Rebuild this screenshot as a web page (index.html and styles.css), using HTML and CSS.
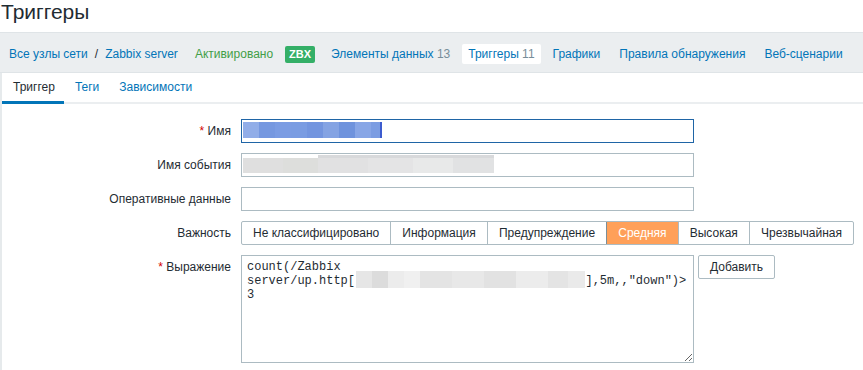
FILE: index.html
```html
<!DOCTYPE html>
<html lang="ru">
<head>
  <meta charset="UTF-8" />
  <meta name="viewport" content="width=device-width, initial-scale=1.0" />
  <title>Триггеры</title>
  <link rel="stylesheet" href="styles.css">
</head>
<body>
  <h1 class="page-title">Триггеры</h1>

  <nav class="host-nav">
    <ul class="breadcrumbs">
      <li><a href="#">Все узлы сети</a></li>
      <li class="separator">/</li>
      <li><a href="#">Zabbix server</a></li>
    </ul>
    <span class="nav-item status-on">Активировано</span>
    <span class="badge-zbx">ZBX</span>
    <a class="nav-item" href="#">Элементы данных <sup>13</sup></a>
    <a class="nav-item active" href="#">Триггеры <sup>11</sup></a>
    <a class="nav-item" href="#">Графики</a>
    <a class="nav-item" href="#">Правила обнаружения</a>
    <a class="nav-item" href="#">Веб-сценарии</a>
  </nav>

  <div class="tab-container">
    <ul class="tabs">
      <li class="tab selected">Триггер</li>
      <li class="tab"><a href="#">Теги</a></li>
      <li class="tab"><a href="#">Зависимости</a></li>
    </ul>

    <form class="form-list">
      <label for="name" class="form-label"><span class="asterisk">*</span> Имя</label>
      <div class="field"><input type="text" id="name" class="text-input focused name-blur" /></div>

      <label for="event_name" class="form-label">Имя события</label>
      <div class="field"><input type="text" id="event_name" class="text-input event-blur" /></div>

      <label for="opdata" class="form-label">Оперативные данные</label>
      <div class="field"><input type="text" id="opdata" class="text-input" /></div>

      <span class="form-label">Важность</span>
      <div class="field">
        <ul class="severity">
          <li>Не классифицировано</li>
          <li>Информация</li>
          <li>Предупреждение</li>
          <li class="checked">Средняя</li>
          <li>Высокая</li>
          <li>Чрезвычайная</li>
        </ul>
      </div>

      <label for="expression" class="form-label"><span class="asterisk">*</span> Выражение</label>
      <div class="field expression-row">
        <textarea id="expression" class="expression" spellcheck="false">count(/Zabbix
server/up.http[                                ],5m,,"down")>
3</textarea>
        <button type="button" class="btn-alt">Добавить</button>
      </div>
    </form>
  </div>
</body>
</html>
```

FILE: styles.css
```css
body {
  margin: 0;
  font-family: "Liberation Sans", Arial, sans-serif;
  font-size: 12px;
  color: #1f2c33;
  background-color: #fff;
}

a {
  color: #0275b8;
  text-decoration: none;
}

ul {
  list-style: none;
  margin: 0;
  padding: 0;
}

.page-title {
  margin: 0 0 8px;
  padding-left: 1px;
  font-size: 21px;
  font-weight: normal;
  line-height: 24px;
}

/* host navigation */
.host-nav {
  display: flex;
  align-items: center;
  gap: 5px;
  box-sizing: border-box;
  height: 41px;
  padding: 3px 0 0 2px;
  background-color: #ebeef0;
  border-top: 1px solid #dfe4e7;
  border-bottom: 1px solid #dfe4e7;
  white-space: nowrap;
}

.host-nav > * {
  flex-shrink: 0;
}

.breadcrumbs {
  display: flex;
  align-items: center;
}

.breadcrumbs a {
  padding: 0 7px;
}

.nav-item {
  padding: 0 7px;
  line-height: 20px;
}

.nav-item sup {
  vertical-align: baseline;
  font-size: 12px;
  color: #768d99;
}

.nav-item.active {
  padding: 0 6px;
  background-color: #fff;
  border-radius: 2px;
  color: #0275b8;
}

.status-on {
  color: #429e47;
  padding-left: 5px;
}

.badge-zbx {
  padding: 0 4px;
  line-height: 17px;
  border-radius: 2px;
  background-color: #34af67;
  color: #fff;
  font-weight: bold;
  font-size: 11px;
  margin-right: 4px;
}

/* tabs */
.tab-container {
  border-left: 2px solid #e6eaec;
  min-height: 297px;
}

.tabs {
  display: flex;
  border-bottom: 2px solid #ebeef0;
}

.tab {
  padding: 0 9px 0 11px;
  line-height: 29px;
  margin-bottom: -2px;
  border-bottom: 2px solid transparent;
}

.tab.selected {
  border-bottom: 3px solid #0275b8;
  line-height: 28px;
}

/* form */
.form-list {
  display: grid;
  grid-template-columns: 229px auto;
  column-gap: 10px;
  row-gap: 10px;
  padding-top: 15px;
}

.form-label {
  text-align: right;
  line-height: 24px;
}

.asterisk {
  color: #d40000;
}

.text-input {
  box-sizing: border-box;
  width: 453px;
  height: 24px;
  margin: 0;
  padding: 0 5px;
  border: 1px solid #acbbc2;
  font: inherit;
  color: #1f2c33;
  background-color: #fff;
  outline: none;
  display: block;
}

.text-input.focused {
  border-color: #1f65a6;
}

.name-blur {
  background-image: linear-gradient(to right,
    #91ade8 0 16px, #7698e0 16px 32px, #7b9ce3 32px 48px, #7a9ce2 48px 64px,
    #7395df 64px 80px, #84a3e3 80px 96px, #6f93dd 96px 112px, #88a6e6 112px 128px,
    #7c9de2 128px 137px, #3d5ccf 137px 139px);
  background-position: 1px 2px;
  background-size: 139px 16px;
  background-repeat: no-repeat;
}

.event-blur {
  background-image:
    linear-gradient(to right, #d8d9db 0 176px),
    linear-gradient(to right,
      #dfdfdf 0 40px, #dddedc 40px 75px, #e1e1e2 75px 125px, #e4e4e5 125px 170px,
      #e8e9e9 170px 210px, #e1e2e3 210px 251px);
  background-position: 76px 1px, 1px 4px;
  background-size: 176px 3px, 251px 15px;
  background-repeat: no-repeat;
}

.severity {
  display: flex;
  box-sizing: border-box;
  width: 613px;
  height: 24px;
  border: 1px solid #acbbc2;
  border-radius: 2px;
}

.severity li {
  flex: auto;
  text-align: center;
  padding: 0 8px;
  line-height: 22px;
  border-left: 1px solid #acbbc2;
}

.severity li:first-child {
  border-left: none;
}

.severity li.checked {
  background-color: #ffa059;
  color: #fff;
  border-left-color: #7b8e98;
}

.expression-row {
  display: flex;
  align-items: flex-start;
  gap: 4px;
}

.expression {
  box-sizing: border-box;
  width: 453px;
  height: 108px;
  margin: 0;
  padding: 4px 5px;
  border: 1px solid #acbbc2;
  font-family: "Liberation Mono", "Courier New", monospace;
  font-size: 12px;
  line-height: 14px;
  color: #1f2c33;
  white-space: pre;
  overflow: hidden;
  resize: both;
  outline: none;
  background-image: linear-gradient(to right,
    #e6e6e6 0 16px, #dcdcdc 16px 32px, #ececec 32px 48px, #f0f0f0 48px 64px,
    #e4e4e4 64px 96px, #e8e8e8 96px 128px, #e2e2e2 128px 160px,
    #ececec 160px 192px, #e4e4e4 192px 212px, #eaeaea 212px 229px);
  background-position: 114px 15px;
  background-size: 229px 17px;
  background-repeat: no-repeat;
}

.btn-alt {
  height: 24px;
  padding: 0 11px;
  border: 1px solid #acbbc2;
  border-radius: 2px;
  background-color: #fff;
  color: #1f2c33;
  font: inherit;
  cursor: pointer;
}

.btn-alt:hover {
  background-color: #f2f2f2;
}
```
